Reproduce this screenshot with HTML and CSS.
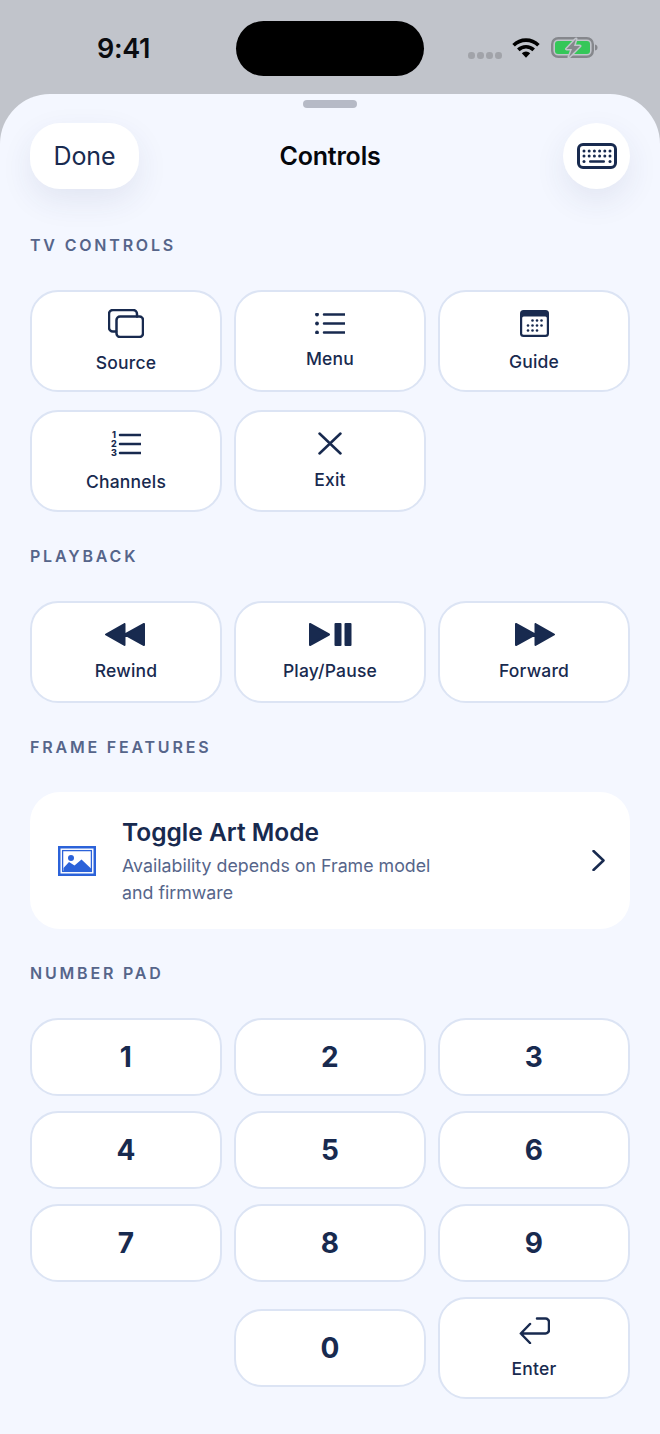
FILE: index.html
```html
<!DOCTYPE html>
<html lang="en">
<head>
<meta charset="utf-8">
<title>Controls</title>
<link rel="stylesheet" href="styles.css">
</head>
<body>
<header class="status">
  <div class="status-left"><span class="time">9:41</span></div>
  <div class="island"></div>
  <div class="status-right">
    <div class="cell-dots"><i></i><i></i><i></i><i></i></div>
    <svg class="wifi" width="28" height="20" viewBox="0 0 28 20"><path d="M1.600 7.200a17.600 17.600 0 0 1 24.800 0" class="wifi-arc"/><path d="M6.300 11.900a11 11 0 0 1 15.400 0" class="wifi-arc"/><path d="M9.800 15.200a6 6 0 0 1 8.400 0L14 19.800z" class="wifi-fill"/></svg>
    <svg class="battery" width="47" height="21" viewBox="0 0 47 21"><rect x="1.200" y="1.200" width="40.600" height="18.600" rx="6" class="bat-shell"/><rect x="4" y="4" width="35" height="13" rx="3" class="bat-level"/><path d="M44 7.500c2 .5 2.500 1.500 2.500 3s-.5 2.500-2.500 3z" class="bat-nub"/><path d="M25 2 15.500 12h5.500L18 20 29 9h-6z" class="bat-halo"/><path d="M25 2 15.500 12h5.500L18 20 29 9h-6z" class="bat-bolt"/></svg>
  </div>
</header>

<main class="sheet">
  <div class="grabber"></div>
  <div class="topbar">
    <button class="pill done">Done</button>
    <h1 class="title">Controls</h1>
    <button class="pill round" aria-label="Keyboard">
      <svg width="40" height="26" viewBox="0 0 40 26"><rect x="1.500" y="1.500" width="37" height="23" rx="4.500" class="line thick"/><g class="ink"><circle cx="7" cy="8" r="1.500"/><circle cx="12.200" cy="8" r="1.500"/><circle cx="17.400" cy="8" r="1.500"/><circle cx="22.600" cy="8" r="1.500"/><circle cx="27.800" cy="8" r="1.500"/><circle cx="33" cy="8" r="1.500"/><circle cx="7" cy="13" r="1.500"/><circle cx="12.200" cy="13" r="1.500"/><circle cx="17.400" cy="13" r="1.500"/><circle cx="22.600" cy="13" r="1.500"/><circle cx="27.800" cy="13" r="1.500"/><circle cx="33" cy="13" r="1.500"/><circle cx="7" cy="18.500" r="1.500"/><rect x="12" y="17.300" width="16" height="2.400" rx="1.200"/><circle cx="33" cy="18.500" r="1.500"/></g></svg>
    </button>
  </div>

  <div class="sections">
    <section class="section">
      <h2 class="section-label">TV CONTROLS</h2>
      <div class="grid grid-tall">
        <button class="key">
          <svg width="36" height="29" viewBox="0 0 36 29"><path d="M8 22.500H5a4 4 0 0 1-4-4V5a4 4 0 0 1 4-4h20a4 4 0 0 1 4 4v2.500" class="line"/><rect x="8.500" y="7.500" width="26.500" height="20.500" rx="3.500" class="line"/></svg>
          <span>Source</span>
        </button>
        <button class="key">
          <svg width="30" height="21" viewBox="0 0 30 21"><g class="ink"><circle cx="2" cy="1.500" r="1.900"/><circle cx="2" cy="10.500" r="1.900"/><circle cx="2" cy="19.500" r="1.900"/></g><path d="M9 1.500h21M9 10.500h21M9 19.500h21" class="line"/></svg>
          <span>Menu</span>
        </button>
        <button class="key">
          <svg width="29" height="27" viewBox="0 0 29 27"><rect width="29" height="27" rx="3.500" class="ink"/><rect x="2.200" y="6.500" width="24.600" height="18.300" rx="1.500" class="paper"/><g class="ink"><circle cx="12.500" cy="10.500" r="1.300"/><circle cx="17" cy="10.500" r="1.300"/><circle cx="21.500" cy="10.500" r="1.300"/><circle cx="8" cy="15.500" r="1.300"/><circle cx="12.500" cy="15.500" r="1.300"/><circle cx="17" cy="15.500" r="1.300"/><circle cx="21.500" cy="15.500" r="1.300"/><circle cx="8" cy="20.500" r="1.300"/><circle cx="12.500" cy="20.500" r="1.300"/><circle cx="17" cy="20.500" r="1.300"/></g></svg>
          <span>Guide</span>
        </button>
        <button class="key">
          <svg width="30" height="27" viewBox="0 0 30 27"><g class="mini"><text x="3" y="8">1</text><text x="3" y="17">2</text><text x="3" y="26">3</text></g><path d="M9 5h21M9 14h21M9 23h21" class="line"/></svg>
          <span>Channels</span>
        </button>
        <button class="key">
          <svg width="24" height="23" viewBox="0 0 24 23"><path d="M1.500 1.500l21 20M22.500 1.500l-21 20" class="line"/></svg>
          <span>Exit</span>
        </button>
      </div>
    </section>

    <section class="section">
      <h2 class="section-label">PLAYBACK</h2>
      <div class="grid grid-tall">
        <button class="key">
          <svg class="nudge-left" width="40" height="23" viewBox="0 0 40 23"><path d="M1 11.500 19.500 1v21zM20 11.500 39 1v21z" class="solid"/></svg>
          <span>Rewind</span>
        </button>
        <button class="key">
          <svg width="43" height="23" viewBox="0 0 43 23"><path d="M1 1v21l19-10.500z" class="solid"/><rect x="25.500" width="7" height="23" rx="1" class="ink"/><rect x="35.500" width="7" height="23" rx="1" class="ink"/></svg>
          <span>Play/Pause</span>
        </button>
        <button class="key">
          <svg class="nudge-right" width="40" height="23" viewBox="0 0 40 23"><path d="M1 1v21l19-10.500zM20.500 1v21L39 11.500z" class="solid"/></svg>
          <span>Forward</span>
        </button>
      </div>
    </section>

    <section class="section">
      <h2 class="section-label">FRAME FEATURES</h2>
      <div class="art-card">
        <svg class="art-icon" width="38" height="30" viewBox="0 0 38 30"><rect x="1.250" y="1.250" width="35.500" height="27.500" class="art-line thick-art"/><rect x="4.600" y="4.600" width="28.800" height="20.800" class="art-line"/><circle cx="13" cy="12" r="3" class="art-fill"/><path d="M5.500 25v-3l5.500-6 5.500 3.500 7-6 9.500 9v2.500z" class="art-fill"/></svg>
        <div class="art-text">
          <div class="art-title">Toggle Art Mode</div>
          <div class="art-sub">Availability depends on Frame model<br>and firmware</div>
        </div>
        <svg class="chevron" width="13" height="21" viewBox="0 0 13 21"><path d="M1.500 1 11.500 10.500 1.500 20" class="line"/></svg>
      </div>
    </section>

    <section class="section">
      <h2 class="section-label">NUMBER PAD</h2>
      <div class="grid grid-num">
        <button class="key num">1</button>
        <button class="key num">2</button>
        <button class="key num">3</button>
        <button class="key num">4</button>
        <button class="key num">5</button>
        <button class="key num">6</button>
        <button class="key num">7</button>
        <button class="key num">8</button>
        <button class="key num">9</button>
        <div class="blank"></div>
        <button class="key num">0</button>
        <button class="key enter">
          <svg width="31" height="27" viewBox="0 0 31 27"><path d="M18 1.500h8.500a3.500 3.500 0 0 1 3.500 3.500v8a3.500 3.500 0 0 1-3.500 3.500H2M11 7 1.800 16.500 11 26" class="line"/></svg>
          <span>Enter</span>
        </button>
      </div>
    </section>
  </div>
</main>
</body>
</html>
```
FILE: styles.css
```css
* { box-sizing: border-box; }

html, body {
  margin: 0;
  height: 1434px;
  overflow: hidden;
  background: #c1c4cb;
  font-family: Inter, "Liberation Sans", sans-serif;
  color: #182a4f;
}

button {
  font-family: inherit;
  color: inherit;
  padding: 0;
  margin: 0;
}

/* Status bar */
.status {
  height: 94px;
  padding-top: 21px;
  display: flex;
  align-items: flex-start;
}
.status-left {
  width: 236px;
  height: 55px;
  padding-left: 97px;
  display: flex;
  align-items: center;
}
.time {
  font-size: 27px;
  font-weight: 600;
  color: #0b0c10;
  letter-spacing: -0.3px;
}
.island {
  width: 188px;
  height: 55px;
  border-radius: 28px;
  background: #000;
}
.status-right {
  height: 55px;
  padding-left: 44px;
  display: flex;
  align-items: center;
}
.cell-dots {
  display: flex;
  gap: 2.500px;
  margin: 14px 10px 0 0;
}
.cell-dots i {
  width: 6.500px;
  height: 6.500px;
  border-radius: 50%;
  background: #a1a3a9;
}
.wifi { margin-right: 11px; margin-top: -2px; }
.battery { margin-top: -2px; }
.wifi-arc { fill: none; stroke: #000; stroke-width: 3.600; }
.wifi-fill { fill: #000; }
.bat-shell { fill: none; stroke: #85878c; stroke-width: 2.400; }
.bat-level { fill: #35c759; }
.bat-nub { fill: #85878c; }
.bat-halo { fill: #c1c4cb; stroke: #c1c4cb; stroke-width: 3; stroke-linejoin: round; }
.bat-bolt { fill: #85878c; }

/* Sheet */
.sheet {
  height: 1340px;
  padding: 6px 30px 0;
  background: #f4f7ff;
  border-radius: 50px 50px 0 0;
}
.grabber {
  width: 54px;
  height: 8px;
  margin: 0 auto 15px;
  border-radius: 4px;
  background: #b6bac6;
}
.topbar {
  height: 66px;
  display: grid;
  grid-template-columns: 1fr auto 1fr;
  align-items: center;
}
.title {
  margin: 0;
  font-size: 25px;
  font-weight: 600;
  color: #05070c;
  letter-spacing: -0.2px;
}
.pill {
  height: 66px;
  border: 0;
  background: #fff;
  box-shadow: 0 12px 32px rgba(40, 60, 110, 0.09);
  display: flex;
  align-items: center;
  justify-content: center;
}
.done {
  width: 109px;
  border-radius: 30px;
  font-size: 25px;
  font-weight: 400;
  letter-spacing: -0.1px;
  justify-self: start;
}
.round {
  width: 67px;
  border-radius: 50%;
  justify-self: end;
}

/* Sections */
.sections {
  margin-top: 46px;
  display: flex;
  flex-direction: column;
  gap: 34px;
}
.section-label {
  margin: 0 0 35px;
  height: 20px;
  font-size: 16px;
  line-height: 20px;
  font-weight: 600;
  letter-spacing: 2.800px;
  color: #56658a;
}
.grid {
  display: grid;
  grid-template-columns: repeat(3, 192px);
  column-gap: 12px;
  align-items: center;
}
.grid-tall {
  grid-auto-rows: 102px;
  row-gap: 18px;
}
.grid-num {
  row-gap: 15px;
}

/* Keys */
.key {
  height: 102px;
  padding-top: 1px;
  background: #fff;
  border: 2px solid #dce4f4;
  border-radius: 28px;
  display: flex;
  flex-direction: column;
  align-items: center;
  justify-content: center;
  gap: 14px;
  font-size: 17.500px;
  line-height: 22px;
  font-weight: 550;
  letter-spacing: 0.2px;
}
.key svg { display: block; flex: none; }
.nudge-left { margin-right: 1.500px; }
.nudge-right { margin-left: 1.500px; }
.num {
  height: 78px;
  padding: 0 0 1px;
  font-size: 28px;
  font-weight: 700;
}
.blank { height: 78px; }

.line {
  fill: none;
  stroke: #182a4f;
  stroke-width: 2.500;
  stroke-linecap: round;
  stroke-linejoin: round;
}
.thick { stroke-width: 3; }
.ink { fill: #182a4f; }
.paper { fill: #fff; }
.solid {
  fill: #182a4f;
  stroke: #182a4f;
  stroke-width: 2;
  stroke-linejoin: round;
}
.mini text {
  font-size: 9px;
  font-weight: 800;
  text-anchor: middle;
  fill: #182a4f;
}

/* Frame card */
.art-card {
  height: 137px;
  padding: 0 25px 0 28px;
  background: #fff;
  border-radius: 30px;
  display: flex;
  align-items: center;
}
.art-icon { flex: none; margin-right: 26px; }
.art-text { flex: 1; padding-top: 2px; }
.art-title {
  font-size: 24.500px;
  line-height: 30px;
  font-weight: 600;
  margin-bottom: 5px;
}
.art-sub {
  font-size: 17.800px;
  line-height: 27px;
  color: #56658a;
}
.chevron { flex: none; }
.art-line { fill: #fff; stroke: #2b62d9; stroke-width: 1.300; }
.thick-art { stroke-width: 2.500; }
.art-fill { fill: #2b62d9; }
```
